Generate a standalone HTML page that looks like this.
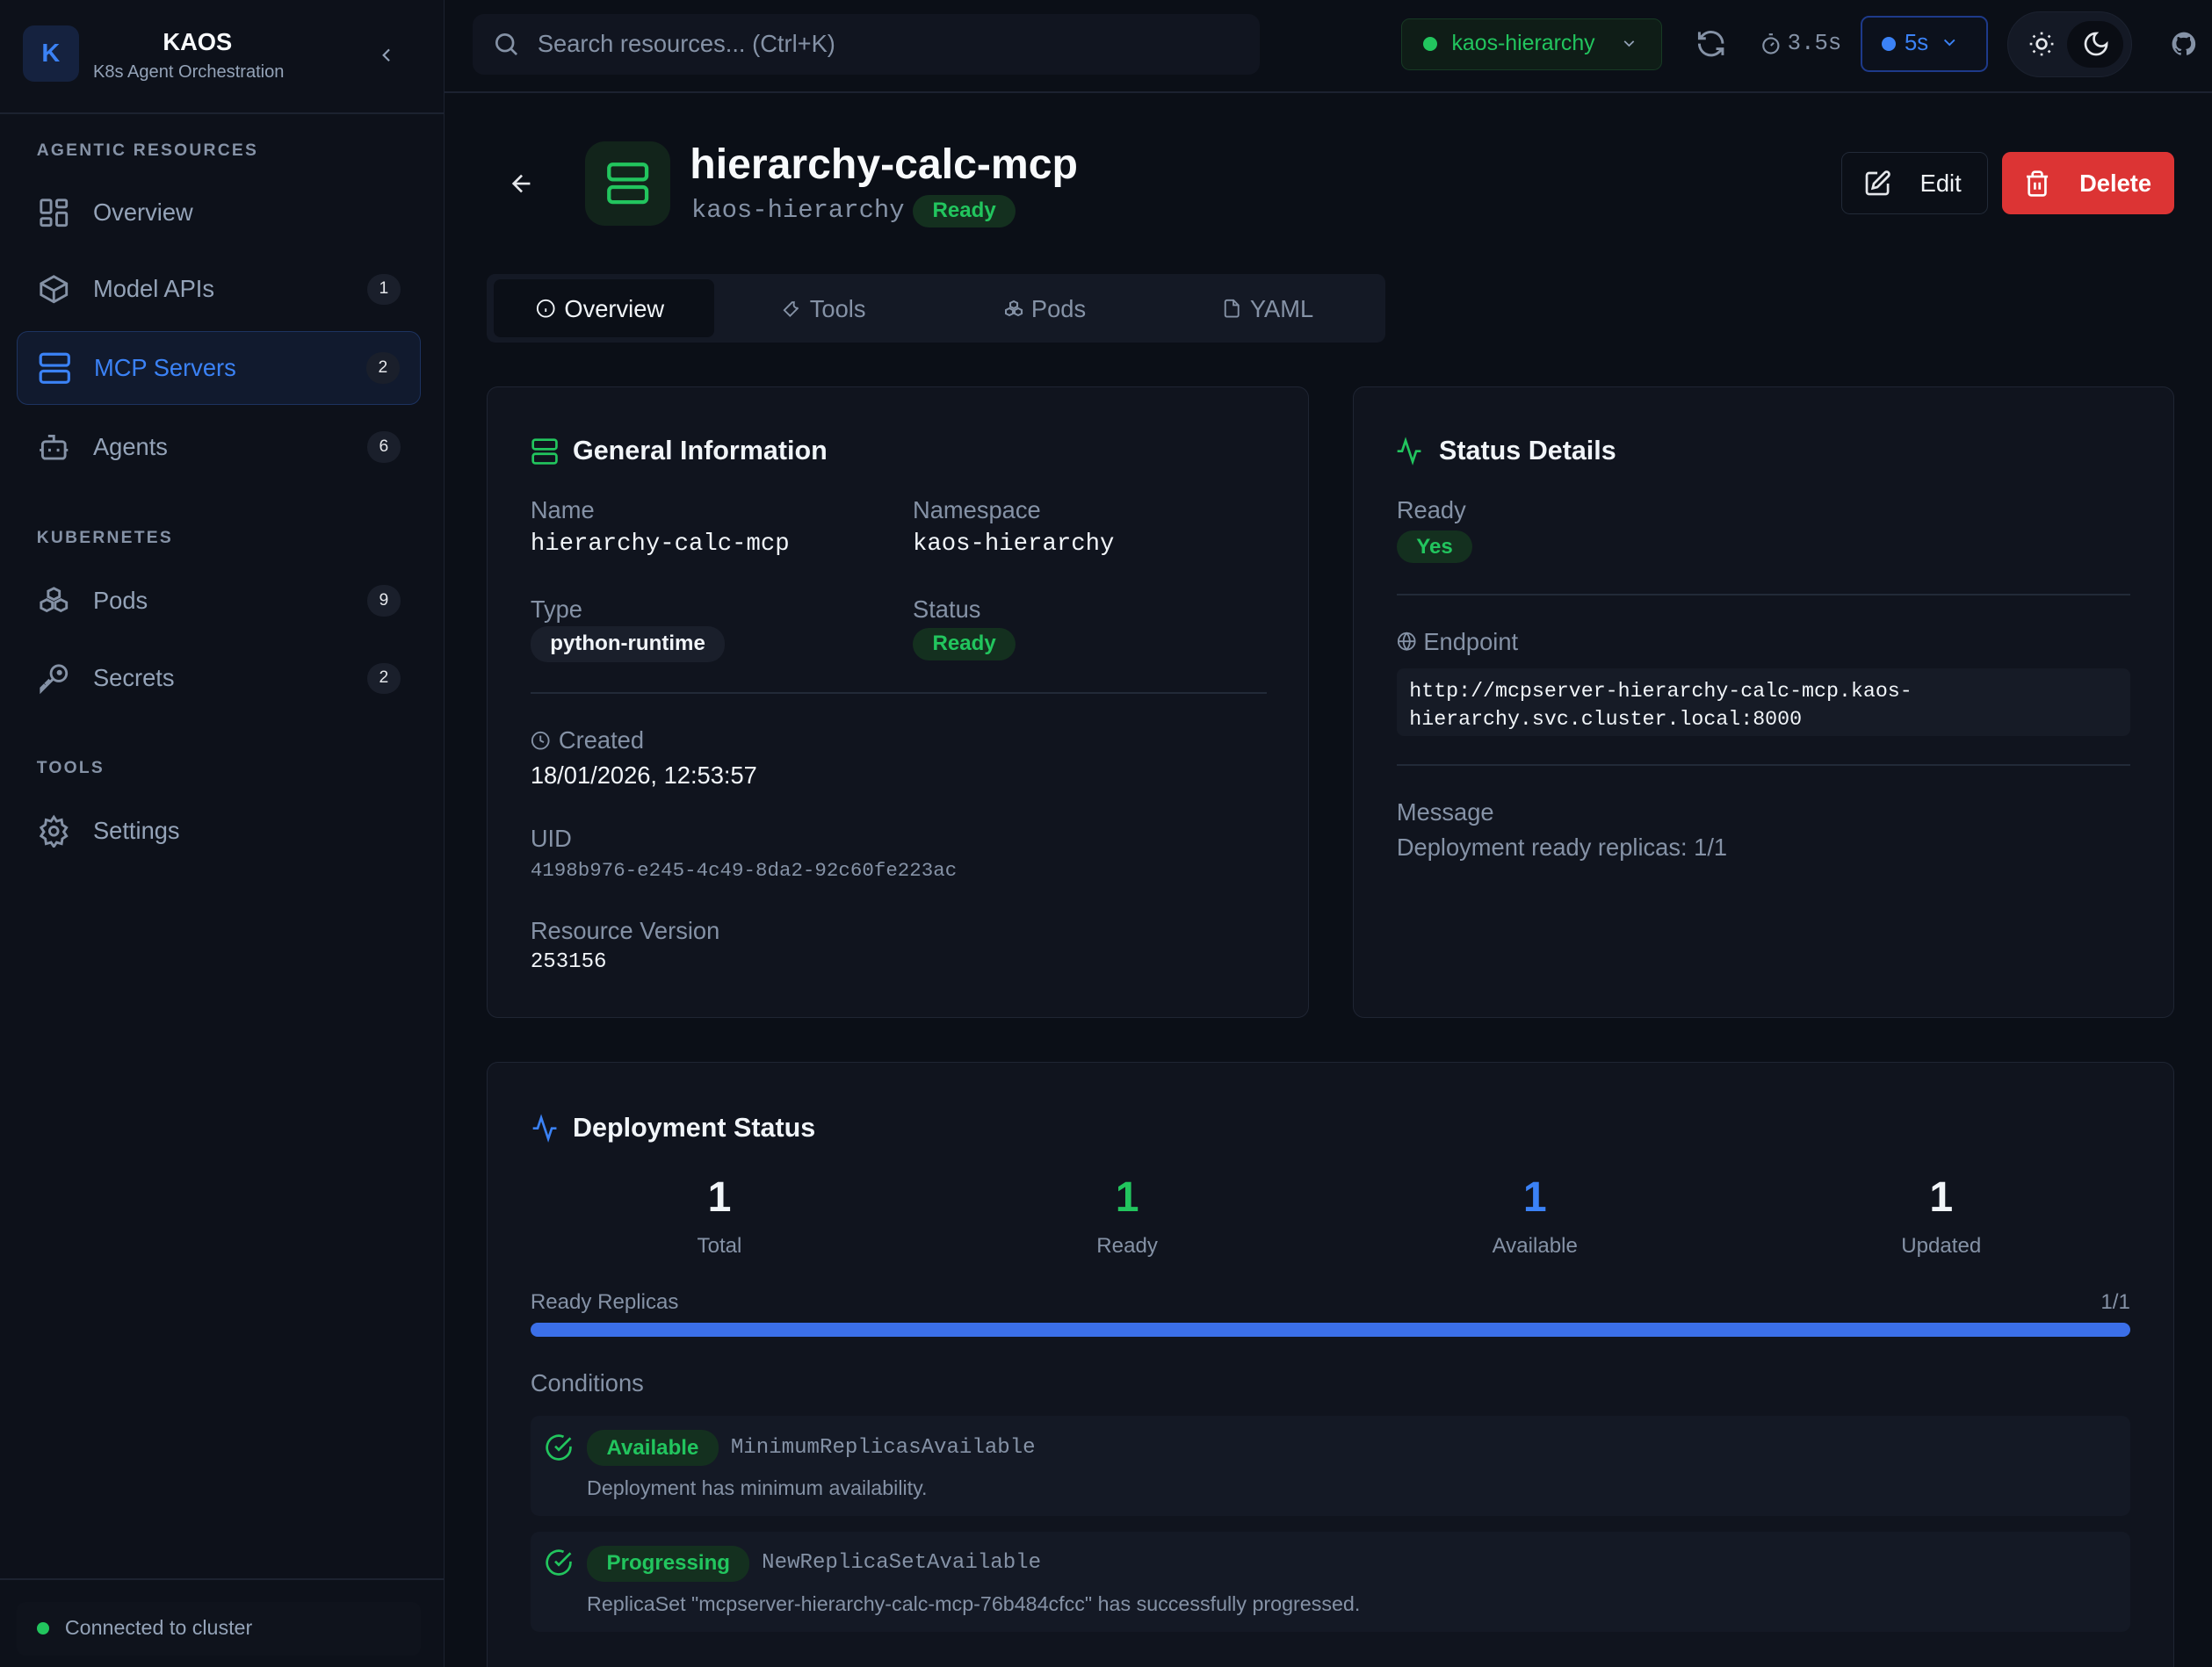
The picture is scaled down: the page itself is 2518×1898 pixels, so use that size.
<!DOCTYPE html>
<html><head><meta charset="utf-8">
<style>
*{box-sizing:border-box;margin:0;padding:0}
html,body{width:2518px;height:1898px;overflow:hidden;background:#0b0f17}
#w{zoom:1.6059;width:1568px;height:1182px;position:relative;font-family:"Liberation Sans",sans-serif;color:#e5e7eb;background:#0b0f17;overflow:hidden}
.a{position:absolute}
.mono{font-family:"Liberation Mono",monospace}
svg{display:block}
.side{left:0;top:0;width:315px;height:1182px;background:#0d111a;border-right:1px solid #1c2230}
.nav{left:12px;width:286px;height:50px;display:flex;align-items:center;padding-left:14px;font-size:17px;color:#94a3b8}
.nav svg{margin-right:16px}
.badge{position:absolute;right:14px;width:24px;height:22px;border-radius:11px;background:#1a1f2b;color:#e5e7eb;font-size:12px;display:flex;align-items:center;justify-content:center}
.sec{left:26px;font-size:12px;letter-spacing:1.4px;color:#8592a6;font-weight:bold}
.card{background:#10141e;border:1px solid #1f2533;border-radius:8px}
.lbl{font-size:17px;color:#8592a6}
.val{font-size:17px;color:#f1f5f9}
.pill{border-radius:12px;background:#14301f;color:#22c55e;font-size:15px;font-weight:bold;padding:3px 14px;display:inline-block}
.hr{height:1px;background:#222a38}
</style></head><body><div id="w">
<!-- sidebar -->
<div class="a side"></div>
<div class="a" style="left:16px;top:18px;width:40px;height:40px;border-radius:8px;background:#15223f;color:#3b82f6;font-weight:bold;font-size:18px;display:flex;align-items:center;justify-content:center">K</div>
<div class="a" style="left:66px;top:20px;width:148px;text-align:center;font-weight:bold;font-size:17px;color:#f8fafc">KAOS</div>
<div class="a" style="left:66px;top:44px;font-size:12.5px;color:#94a3b8">K8s Agent Orchestration</div>
<svg class="a" style="left:266px;top:31px" width="16" height="16" viewBox="0 0 24 24" fill="none" stroke="#94a3b8" stroke-width="2"><path d="M15 18l-6-6 6-6"/></svg>
<div class="a" style="left:0;top:80px;width:315px;height:1px;background:#1c2230"></div>
<div class="a sec" style="top:100px">AGENTIC RESOURCES</div>
<div class="a nav" style="top:126px"><svg width="24" height="24" viewBox="0 0 24 24" fill="none" stroke="#8592a6" stroke-width="1.8"><rect x="3" y="3" width="7" height="9" rx="1"/><rect x="14" y="3" width="7" height="5" rx="1"/><rect x="14" y="12" width="7" height="9" rx="1"/><rect x="3" y="16" width="7" height="5" rx="1"/></svg>Overview</div>
<div class="a nav" style="top:180px"><svg width="24" height="24" viewBox="0 0 24 24" fill="none" stroke="#8592a6" stroke-width="1.8"><path d="M21 8l-9-5-9 5v8l9 5 9-5z"/><path d="M3 8l9 5 9-5M12 13v8"/></svg>Model APIs<span class="badge">1</span></div>
<div class="a nav" style="top:235px;height:52px;background:#111a2e;border:1px solid #1d3360;border-radius:8px;color:#3b82f6"><svg width="24" height="24" viewBox="0 0 24 24" fill="none" stroke="#3b82f6" stroke-width="2"><rect x="2" y="2" width="20" height="8" rx="2"/><rect x="2" y="14" width="20" height="8" rx="2"/><path d="M6 6h.01M6 18h.01"/></svg>MCP Servers<span class="badge">2</span></div>
<div class="a nav" style="top:292px"><svg width="24" height="24" viewBox="0 0 24 24" fill="none" stroke="#8592a6" stroke-width="1.8"><path d="M12 8V4H8"/><rect x="4" y="8" width="16" height="12" rx="2"/><path d="M2 14h2M20 14h2M9 13v2M15 13v2"/></svg>Agents<span class="badge">6</span></div>
<div class="a sec" style="top:375px">KUBERNETES</div>
<div class="a nav" style="top:401px"><svg width="24" height="24" viewBox="0 0 24 24" fill="none" stroke="#8592a6" stroke-width="1.8"><path d="M12 3l4 2v4l-4 2-4-2V5zM7 11l4 2v4l-4 2-4-2v-4zM17 11l4 2v4l-4 2-4-2v-4z"/></svg>Pods<span class="badge">9</span></div>
<div class="a nav" style="top:456px"><svg width="24" height="24" viewBox="0 0 24 24" fill="none" stroke="#8592a6" stroke-width="1.8"><circle cx="15.5" cy="8.5" r="5.5"/><path d="M11.5 12.5L3 21v-2l2-2 1 1 1.5-1.5-1-1L9 13"/><circle cx="16" cy="8" r="1"/></svg>Secrets<span class="badge">2</span></div>
<div class="a sec" style="top:538px">TOOLS</div>
<div class="a nav" style="top:564px"><svg width="24" height="24" viewBox="0 0 24 24" fill="none" stroke="#8592a6" stroke-width="1.8"><circle cx="12" cy="12" r="3"/><path d="M12 2l2 3 3.5-1 .5 3.5 3 2-2 3 2 3-3 2-.5 3.5-3.5-1-2 3-2-3-3.5 1-.5-3.5-3-2 2-3-2-3 3-2 .5-3.5 3.5 1z"/></svg>Settings</div>
<div class="a" style="left:0;top:1119px;width:315px;height:1px;background:#1c2230"></div>
<div class="a" style="left:12px;top:1136px;width:286px;height:38px;background:#0f131c;border-radius:6px"></div>
<div class="a" style="left:26px;top:1150px;width:9px;height:9px;border-radius:50%;background:#22c55e"></div>
<div class="a" style="left:46px;top:1146px;font-size:14.5px;color:#94a3b8">Connected to cluster</div>
<!-- header -->
<div class="a" style="left:315px;top:65px;width:1253px;height:1px;background:#1c2230"></div>
<div class="a" style="left:335px;top:10px;width:558px;height:43px;background:#111520;border-radius:8px"></div>
<svg class="a" style="left:349px;top:21px" width="20" height="20" viewBox="0 0 24 24" fill="none" stroke="#8592a6" stroke-width="2"><circle cx="11" cy="11" r="7"/><path d="M21 21l-5-5"/></svg>
<div class="a" style="left:381px;top:21px;font-size:17px;color:#8592a6">Search resources... (Ctrl+K)</div>
<div class="a" style="left:993px;top:13px;width:185px;height:37px;border:1px solid #173a24;background:#0f1d17;border-radius:6px"></div>
<div class="a" style="left:1009px;top:26px;width:10px;height:10px;border-radius:50%;background:#22c55e"></div>
<div class="a" style="left:1029px;top:22px;font-size:15.5px;color:#22c55e">kaos-hierarchy</div>
<svg class="a" style="left:1148px;top:24px" width="13" height="13" viewBox="0 0 24 24" fill="none" stroke="#94a3b8" stroke-width="2"><path d="M6 9l6 6 6-6"/></svg>
<svg class="a" style="left:1202px;top:20px" width="22" height="22" viewBox="0 0 24 24" fill="none" stroke="#8592a6" stroke-width="2"><path d="M21 12a9 9 0 0 0-15-6.7L3 8M3 3v5h5M3 12a9 9 0 0 0 15 6.7L21 16M21 21v-5h-5"/></svg>
<svg class="a" style="left:1247px;top:23px" width="16" height="16" viewBox="0 0 24 24" fill="none" stroke="#8592a6" stroke-width="2"><circle cx="12" cy="14" r="8"/><path d="M10 2h4M12 14l3-3"/></svg>
<div class="a mono" style="left:1267px;top:22px;font-size:16px;color:#8592a6">3.5s</div>
<div class="a" style="left:1319px;top:11px;width:90px;height:40px;border:1.5px solid #1e3a8a;border-radius:6px;background:#0c111c"></div>
<div class="a" style="left:1334px;top:26px;width:10px;height:10px;border-radius:50%;background:#3b82f6"></div>
<div class="a" style="left:1350px;top:22px;font-size:16px;color:#3b82f6">5s</div>
<svg class="a" style="left:1375px;top:23px" width="14" height="14" viewBox="0 0 24 24" fill="none" stroke="#3b82f6" stroke-width="2"><path d="M6 9l6 6 6-6"/></svg>
<div class="a" style="left:1423px;top:8px;width:88px;height:47px;border-radius:24px;background:#141925;border:1px solid #1c2230"></div>
<div class="a" style="left:1465px;top:15px;width:40px;height:33px;border-radius:18px;background:#0a0d14"></div>
<svg class="a" style="left:1437px;top:21px" width="20" height="20" viewBox="0 0 24 24" fill="none" stroke="#e5e7eb" stroke-width="2"><circle cx="12" cy="12" r="4"/><path d="M12 2v2M12 20v2M4.9 4.9l1.4 1.4M17.7 17.7l1.4 1.4M2 12h2M20 12h2M4.9 19.1l1.4-1.4M17.7 6.3l1.4-1.4"/></svg>
<svg class="a" style="left:1476px;top:21px" width="20" height="20" viewBox="0 0 24 24" fill="none" stroke="#e5e7eb" stroke-width="2"><path d="M12 3a6 6 0 0 0 9 9 9 9 0 1 1-9-9z"/></svg>
<svg class="a" style="left:1538px;top:21px" width="20" height="20" viewBox="0 0 24 24" fill="#8592a6"><path d="M12 2a10 10 0 0 0-3.2 19.5c.5.1.7-.2.7-.5v-1.7c-2.8.6-3.4-1.3-3.4-1.3-.5-1.2-1.1-1.5-1.1-1.5-.9-.6.1-.6.1-.6 1 .1 1.5 1 1.5 1 .9 1.5 2.4 1.1 2.9.8.1-.6.4-1.1.6-1.3-2.2-.3-4.6-1.1-4.6-5 0-1.1.4-2 1-2.7-.1-.3-.4-1.3.1-2.7 0 0 .8-.3 2.7 1a9.4 9.4 0 0 1 5 0c1.9-1.3 2.7-1 2.7-1 .5 1.4.2 2.4.1 2.7.6.7 1 1.6 1 2.7 0 3.9-2.4 4.7-4.6 5 .4.3.7.9.7 1.9V21c0 .3.2.6.7.5A10 10 0 0 0 12 2z"/></svg>
<!-- title -->
<svg class="a" style="left:360px;top:120px" width="20" height="20" viewBox="0 0 24 24" fill="none" stroke="#e5e7eb" stroke-width="2"><path d="M19 12H5M12 19l-7-7 7-7"/></svg>
<div class="a" style="left:415px;top:100px;width:60px;height:60px;border-radius:14px;background:#12241b"></div>
<svg class="a" style="left:429px;top:114px" width="32" height="32" viewBox="0 0 24 24" fill="none" stroke="#22c55e" stroke-width="2"><rect x="2" y="2" width="20" height="8" rx="2"/><rect x="2" y="14" width="20" height="8" rx="2"/><path d="M6 6h.01M6 18h.01"/></svg>
<div class="a" style="left:489px;top:99px;font-size:30px;font-weight:bold;color:#f8fafc">hierarchy-calc-mcp</div>
<div class="a mono" style="left:490px;top:139px;font-size:18px;color:#8592a6">kaos-hierarchy</div>
<div class="a pill" style="left:647px;top:138px">Ready</div>
<div class="a" style="left:1305px;top:108px;width:104px;height:44px;border:1px solid #222a38;border-radius:6px;background:#0b0f17"></div>
<svg class="a" style="left:1321px;top:120px" width="20" height="20" viewBox="0 0 24 24" fill="none" stroke="#e5e7eb" stroke-width="2"><path d="M12 3H5a2 2 0 0 0-2 2v14a2 2 0 0 0 2 2h14a2 2 0 0 0 2-2v-7"/><path d="M18.4 2.6a2.1 2.1 0 0 1 3 3L12 15l-4 1 1-4z"/></svg>
<div class="a" style="left:1361px;top:120px;font-size:17px;color:#f1f5f9">Edit</div>
<div class="a" style="left:1419px;top:108px;width:122px;height:44px;border-radius:6px;background:#dc3434"></div>
<svg class="a" style="left:1434px;top:120px" width="20" height="20" viewBox="0 0 24 24" fill="none" stroke="#fff" stroke-width="2"><path d="M3 6h18M19 6v14a2 2 0 0 1-2 2H7a2 2 0 0 1-2-2V6M8 6V4a2 2 0 0 1 2-2h4a2 2 0 0 1 2 2v2M10 11v6M14 11v6"/></svg>
<div class="a" style="left:1474px;top:120px;font-size:17px;color:#fff;font-weight:bold">Delete</div>
<!-- tabs -->
<div class="a" style="left:345px;top:194px;width:637px;height:49px;background:#141925;border-radius:6px"></div>
<div class="a" style="left:350px;top:198px;width:156px;height:41px;background:#0b0f17;border-radius:5px"></div>
<svg class="a" style="left:380px;top:212px" width="14" height="14" viewBox="0 0 24 24" fill="none" stroke="#f1f5f9" stroke-width="2"><circle cx="12" cy="12" r="10"/><path d="M12 16v-4M12 8h.01"/></svg>
<div class="a" style="left:400px;top:209px;font-size:17px;color:#f1f5f9">Overview</div>
<svg class="a" style="left:554px;top:212px" width="14" height="14" viewBox="0 0 24 24" fill="none" stroke="#8592a6" stroke-width="2"><path d="M14.7 6.3a4 4 0 0 0 5 5L13 18l-3 3-7-7 3-3 6.7-6.7a4 4 0 0 0 2 0z"/></svg>
<div class="a" style="left:574px;top:209px;font-size:17px;color:#8592a6">Tools</div>
<svg class="a" style="left:711px;top:212px" width="15" height="15" viewBox="0 0 24 24" fill="none" stroke="#8592a6" stroke-width="2"><path d="M12 3l4 2v4l-4 2-4-2V5zM7 11l4 2v4l-4 2-4-2v-4zM17 11l4 2v4l-4 2-4-2v-4z"/></svg>
<div class="a" style="left:731px;top:209px;font-size:17px;color:#8592a6">Pods</div>
<svg class="a" style="left:866px;top:212px" width="14" height="14" viewBox="0 0 24 24" fill="none" stroke="#8592a6" stroke-width="2"><path d="M14 2H6a2 2 0 0 0-2 2v16a2 2 0 0 0 2 2h12a2 2 0 0 0 2-2V8z"/><path d="M14 2v6h6"/></svg>
<div class="a" style="left:886px;top:209px;font-size:17px;color:#8592a6">YAML</div>
<!-- general -->
<div class="a card" style="left:345px;top:274px;width:583px;height:448px"></div>
<svg class="a" style="left:376px;top:310px" width="20" height="20" viewBox="0 0 24 24" fill="none" stroke="#22c55e" stroke-width="2"><rect x="2" y="2" width="20" height="8" rx="2"/><rect x="2" y="14" width="20" height="8" rx="2"/><path d="M6 6h.01M6 18h.01"/></svg>
<div class="a" style="left:406px;top:309px;font-size:19px;font-weight:bold;color:#f1f5f9">General Information</div>
<div class="a lbl" style="left:376px;top:352px">Name</div>
<div class="a mono val" style="left:376px;top:376px">hierarchy-calc-mcp</div>
<div class="a lbl" style="left:647px;top:352px">Namespace</div>
<div class="a mono val" style="left:647px;top:376px">kaos-hierarchy</div>
<div class="a lbl" style="left:376px;top:422px">Type</div>
<div class="a" style="left:376px;top:444px;background:#1a1f2b;border-radius:12px;padding:4px 14px;font-size:15px;font-weight:bold;color:#f1f5f9">python-runtime</div>
<div class="a lbl" style="left:647px;top:422px">Status</div>
<div class="a pill" style="left:647px;top:445px">Ready</div>
<div class="a hr" style="left:376px;top:491px;width:522px"></div>
<svg class="a" style="left:376px;top:518px" width="14" height="14" viewBox="0 0 24 24" fill="none" stroke="#8592a6" stroke-width="2"><circle cx="12" cy="12" r="10"/><path d="M12 6v6l4 2"/></svg>
<div class="a lbl" style="left:396px;top:515px">Created</div>
<div class="a val" style="left:376px;top:540px">18/01/2026, 12:53:57</div>
<div class="a lbl" style="left:376px;top:585px">UID</div>
<div class="a mono" style="left:376px;top:609px;font-size:14px;color:#8592a6">4198b976-e245-4c49-8da2-92c60fe223ac</div>
<div class="a lbl" style="left:376px;top:650px">Resource Version</div>
<div class="a mono" style="left:376px;top:674px;font-size:15px;color:#f1f5f9">253156</div>
<!-- status -->
<div class="a card" style="left:959px;top:274px;width:582px;height:448px"></div>
<svg class="a" style="left:989px;top:309px" width="20" height="22" viewBox="0 0 24 24" fill="none" stroke="#22c55e" stroke-width="2"><path d="M22 12h-4l-3 9L9 3l-3 9H2"/></svg>
<div class="a" style="left:1020px;top:309px;font-size:19px;font-weight:bold;color:#f1f5f9">Status Details</div>
<div class="a lbl" style="left:990px;top:352px">Ready</div>
<div class="a pill" style="left:990px;top:376px">Yes</div>
<div class="a hr" style="left:990px;top:421px;width:520px"></div>
<svg class="a" style="left:990px;top:448px" width="14" height="14" viewBox="0 0 24 24" fill="none" stroke="#8592a6" stroke-width="2"><circle cx="12" cy="12" r="10"/><path d="M2 12h20M12 2a15 15 0 0 1 0 20 15 15 0 0 1 0-20z"/></svg>
<div class="a lbl" style="left:1009px;top:445px">Endpoint</div>
<div class="a" style="left:990px;top:474px;width:520px;height:48px;background:#161b26;border-radius:5px"></div>
<div class="a mono" style="left:999px;top:480px;font-size:14.5px;line-height:20px;color:#f1f5f9">http://mcpserver-hierarchy-calc-mcp.kaos-<br>hierarchy.svc.cluster.local:8000</div>
<div class="a hr" style="left:990px;top:542px;width:520px"></div>
<div class="a lbl" style="left:990px;top:566px">Message</div>
<div class="a lbl" style="left:990px;top:591px">Deployment ready replicas: 1/1</div>
<!-- deployment -->
<div class="a card" style="left:345px;top:753px;width:1196px;height:460px"></div>
<svg class="a" style="left:376px;top:789px" width="20" height="22" viewBox="0 0 24 24" fill="none" stroke="#3b82f6" stroke-width="2"><path d="M22 12h-4l-3 9L9 3l-3 9H2"/></svg>
<div class="a" style="left:406px;top:789px;font-size:19px;font-weight:bold;color:#f1f5f9">Deployment Status</div>
<div class="a" style="left:410px;top:831px;width:200px;text-align:center;font-size:30px;font-weight:bold;color:#f1f5f9">1</div>
<div class="a" style="left:410px;top:875px;width:200px;text-align:center;font-size:15px;color:#8592a6">Total</div>
<div class="a" style="left:699px;top:831px;width:200px;text-align:center;font-size:30px;font-weight:bold;color:#22c55e">1</div>
<div class="a" style="left:699px;top:875px;width:200px;text-align:center;font-size:15px;color:#8592a6">Ready</div>
<div class="a" style="left:988px;top:831px;width:200px;text-align:center;font-size:30px;font-weight:bold;color:#3b82f6">1</div>
<div class="a" style="left:988px;top:875px;width:200px;text-align:center;font-size:15px;color:#8592a6">Available</div>
<div class="a" style="left:1276px;top:831px;width:200px;text-align:center;font-size:30px;font-weight:bold;color:#f1f5f9">1</div>
<div class="a" style="left:1276px;top:875px;width:200px;text-align:center;font-size:15px;color:#8592a6">Updated</div>
<div class="a" style="left:376px;top:915px;font-size:15px;color:#8592a6">Ready Replicas</div>
<div class="a" style="left:1480px;top:915px;width:30px;text-align:right;font-size:15px;color:#8592a6">1/1</div>
<div class="a" style="left:376px;top:938px;width:1134px;height:10px;border-radius:5px;background:#3b6fe8"></div>
<div class="a lbl" style="left:376px;top:971px">Conditions</div>
<div class="a" style="left:376px;top:1004px;width:1134px;height:71px;background:#141925;border-radius:6px"></div>
<svg class="a" style="left:386px;top:1016px" width="20" height="20" viewBox="0 0 24 24" fill="none" stroke="#22c55e" stroke-width="2"><path d="M22 11.1V12a10 10 0 1 1-5.9-9.1"/><path d="M22 4L12 14l-3-3"/></svg>
<div class="a pill" style="left:416px;top:1014px;padding:4px 14px">Available</div>
<div class="a mono" style="left:518px;top:1018px;font-size:15px;color:#8592a6">MinimumReplicasAvailable</div>
<div class="a" style="left:416px;top:1047px;font-size:14.5px;color:#8592a6">Deployment has minimum availability.</div>
<div class="a" style="left:376px;top:1086px;width:1134px;height:71px;background:#141925;border-radius:6px"></div>
<svg class="a" style="left:386px;top:1098px" width="20" height="20" viewBox="0 0 24 24" fill="none" stroke="#22c55e" stroke-width="2"><path d="M22 11.1V12a10 10 0 1 1-5.9-9.1"/><path d="M22 4L12 14l-3-3"/></svg>
<div class="a pill" style="left:416px;top:1096px;padding:4px 14px">Progressing</div>
<div class="a mono" style="left:540px;top:1100px;font-size:15px;color:#8592a6">NewReplicaSetAvailable</div>
<div class="a" style="left:416px;top:1129px;font-size:14.5px;color:#8592a6">ReplicaSet "mcpserver-hierarchy-calc-mcp-76b484cfcc" has successfully progressed.</div>
</div></body></html>
